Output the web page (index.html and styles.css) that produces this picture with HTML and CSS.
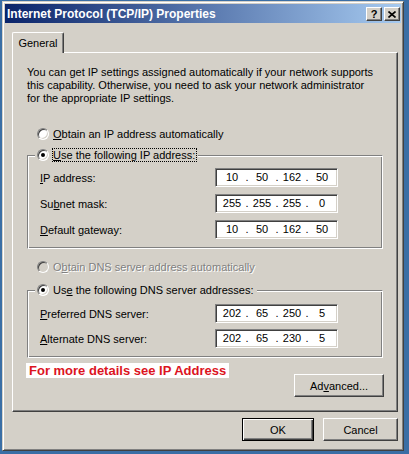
FILE: index.html
```html
<!DOCTYPE html>
<html>
<head>
<meta charset="utf-8">
<link rel="stylesheet" href="styles.css">
</head>
<body>
<div class="window">
  <div class="titlebar">
    <span class="title">Internet Protocol (TCP/IP) Properties</span>
    <div class="tbtns">
      <span class="tbtn help">?</span>
      <span class="tbtn close"><svg width="8" height="7" viewBox="0 0 8 7"><path d="M0.5 0.5 L7.5 6.5 M7.5 0.5 L0.5 6.5" stroke="#000" stroke-width="1.6" fill="none"/></svg></span>
    </div>
  </div>
  <div class="client">
    <div class="tabs"><div class="tab">General</div></div>
    <div class="panel">
      <p class="desc">You can get IP settings assigned automatically if your network supports<br>this capability. Otherwise, you need to ask your network administrator<br>for the appropriate IP settings.</p>
      <div class="radio-row r1"><span class="radio"></span><span><u>O</u>btain an IP address automatically</span></div>
      <fieldset class="group g1">
        <legend><span class="radio on"></span><span class="focus"><u>U</u>se the following IP address:</span></legend>
        <div class="rows">
          <span class="lbl"><u>I</u>P address:</span>
          <span class="ip"><span class="seg">10</span><span class="dot">.</span><span class="seg">50</span><span class="dot">.</span><span class="seg">162</span><span class="dot">.</span><span class="seg">50</span></span>
          <span class="lbl">Su<u>b</u>net mask:</span>
          <span class="ip"><span class="seg">255</span><span class="dot">.</span><span class="seg">255</span><span class="dot">.</span><span class="seg">255</span><span class="dot">.</span><span class="seg">0</span></span>
          <span class="lbl"><u>D</u>efault gateway:</span>
          <span class="ip"><span class="seg">10</span><span class="dot">.</span><span class="seg">50</span><span class="dot">.</span><span class="seg">162</span><span class="dot">.</span><span class="seg">50</span></span>
        </div>
      </fieldset>
      <div class="radio-row r3 disabled"><span class="radio"></span><span>O<u>b</u>tain DNS server address automatically</span></div>
      <fieldset class="group g2">
        <legend><span class="radio on"></span><span class="nofocus">Us<u>e</u> the following DNS server addresses:</span></legend>
        <div class="rows dns">
          <span class="lbl"><u>P</u>referred DNS server:</span>
          <span class="ip"><span class="seg">202</span><span class="dot">.</span><span class="seg">65</span><span class="dot">.</span><span class="seg">250</span><span class="dot">.</span><span class="seg">5</span></span>
          <span class="lbl"><u>A</u>lternate DNS server:</span>
          <span class="ip"><span class="seg">202</span><span class="dot">.</span><span class="seg">65</span><span class="dot">.</span><span class="seg">230</span><span class="dot">.</span><span class="seg">5</span></span>
        </div>
      </fieldset>
      <div class="bottom-row">
        <span class="note">For more details see IP Address</span>
        <span class="btn adv">Ad<u>v</u>anced...</span>
      </div>
    </div>
    <div class="buttons">
      <span class="btn ok">OK</span>
      <span class="btn cancel">Cancel</span>
    </div>
  </div>
</div>
</body>
</html>
```
FILE: styles.css
```css
html, body {
  margin: 0;
  padding: 0;
}
body {
  width: 409px;
  height: 454px;
  overflow: hidden;
  background: #3a6ea5;
  font-family: "Liberation Sans", Arial, sans-serif;
  font-size: 11px;
  color: #000;
}
.window {
  box-sizing: border-box;
  width: 402px;
  height: 450px;
  margin: 1px 0 0 2px;
  background: #d4d0c8;
  border: 1px solid;
  border-color: #d4d0c8 #404040 #404040 #d4d0c8;
  box-shadow: inset 1px 1px 0 #fff, inset -1px -1px 0 #808080;
  padding: 2px;
  display: flex;
  flex-direction: column;
}
.titlebar {
  height: 19px;
  background: linear-gradient(to right, #0a246a, #a6caf0);
  display: flex;
  align-items: center;
  justify-content: space-between;
  padding: 0 1px 0 2px;
  color: #fff;
  font-weight: bold;
}
.title {
  font-size: 12px;
}
.tbtns {
  display: flex;
  gap: 2px;
  margin-top: 1px;
}
.tbtn {
  box-sizing: border-box;
  width: 16px;
  height: 14px;
  background: #d4d0c8;
  border: 1px solid;
  border-color: #fff #404040 #404040 #fff;
  box-shadow: inset -1px -1px 0 #808080;
  display: flex;
  align-items: center;
  justify-content: center;
  color: #000;
  font-size: 11px;
  line-height: 12px;
}
.client {
  padding: 9px 0 0 7px;
}
.tabs {
  display: flex;
  height: 20px;
}
.tab {
  box-sizing: border-box;
  width: 52px;
  height: 21px;
  border-top: 1px solid #fff;
  border-left: 1px solid #fff;
  border-right: 1px solid #404040;
  border-radius: 2px 2px 0 0;
  box-shadow: inset -1px 0 0 #808080;
  background: #d4d0c8;
  display: flex;
  align-items: center;
  justify-content: center;
  position: relative;
  z-index: 1;
  padding-bottom: 1px;
}
.panel {
  box-sizing: border-box;
  width: 386px;
  height: 360px;
  border: 1px solid;
  border-color: #fff #404040 #404040 #fff;
  box-shadow: inset -1px -1px 0 #808080;
  padding: 0 14px 0 14px;
}
.desc {
  margin: 13px 0 0;
  line-height: 13px;
}
.radio-row {
  display: flex;
  align-items: center;
  height: 16px;
  gap: 4px;
  padding-left: 10px;
}
.r1 { margin-top: 21px; }
.r3 { margin-top: 10px; }
.radio {
  box-sizing: border-box;
  width: 12px;
  height: 12px;
  flex: none;
  border-radius: 50%;
  border: 1px solid;
  border-color: #808080 #fff #fff #808080;
  box-shadow: inset 1px 1px 0 #404040, inset -1px -1px 0 #d4d0c8;
  background: #fff;
  display: flex;
  align-items: center;
  justify-content: center;
}
.radio.on::after {
  content: "";
  width: 4px;
  height: 4px;
  border-radius: 50%;
  background: #000;
}
.disabled { color: #808080; text-shadow: 1px 1px 0 #fff; }
.disabled .radio { background: #d4d0c8; }
.group {
  box-sizing: border-box;
  width: 356px;
  min-inline-size: 0;
  border: 1px solid;
  border-color: #808080 #fff #fff #808080;
  box-shadow: inset 1px 1px 0 #fff, inset -1px -1px 0 #808080;
  padding: 0 0 9px 12px;
}
.g1 { margin: 5px 0 0; }
.g2 { margin: 7px 0 0; }
legend {
  display: flex;
  align-items: center;
  height: 16px;
  margin-left: -5px;
  padding: 0 1px 0 2px;
  background: #d4d0c8;
  gap: 3px;
}
.focus {
  border: 1px dotted #000;
  padding: 0 1px 0 0;
  line-height: 12px;
}
.nofocus {
  border: 1px solid transparent;
  padding: 0 1px 0 0;
  line-height: 12px;
}
.rows {
  display: grid;
  grid-template-columns: 175px 123px;
  grid-auto-rows: 19px;
  row-gap: 7px;
  margin-top: 5px;
  align-items: center;
}
.rows.dns {
  row-gap: 6px;
  margin-top: 6px;
}
.ip {
  box-sizing: border-box;
  height: 19px;
  background: #fff;
  border: 1px solid;
  border-color: #808080 #fff #fff #808080;
  box-shadow: inset 1px 1px 0 #404040, inset -1px -1px 0 #d4d0c8;
  padding-left: 1px;
  display: flex;
  align-items: center;
  line-height: 17px;
}
.seg {
  width: 30px;
  text-align: center;
}
.dot {
  width: 0;
  display: flex;
  justify-content: center;
}
.bottom-row {
  display: flex;
  justify-content: space-between;
  align-items: flex-start;
  margin: 5px -1px 0 -1px;
}
.note {
  background: #fff;
  color: #dc141e;
  font-weight: bold;
  font-size: 13px;
  line-height: 15px;
  padding: 0 3px;
}
.btn {
  box-sizing: border-box;
  display: flex;
  align-items: center;
  justify-content: center;
  height: 23px;
  background: #d4d0c8;
  border: 1px solid;
  border-color: #fff #404040 #404040 #fff;
  box-shadow: inset -1px -1px 0 #808080;
}
.adv {
  width: 90px;
  margin-top: 11px;
}
.buttons {
  display: flex;
  justify-content: flex-end;
  gap: 9px;
  width: 386px;
  margin-top: 6px;
}
.ok {
  width: 72px;
  border: 1px solid #000;
  box-shadow: inset 1px 1px 0 #fff, inset -1px -1px 0 #404040, inset -2px -2px 0 #808080;
}
.cancel {
  width: 75px;
}
```
